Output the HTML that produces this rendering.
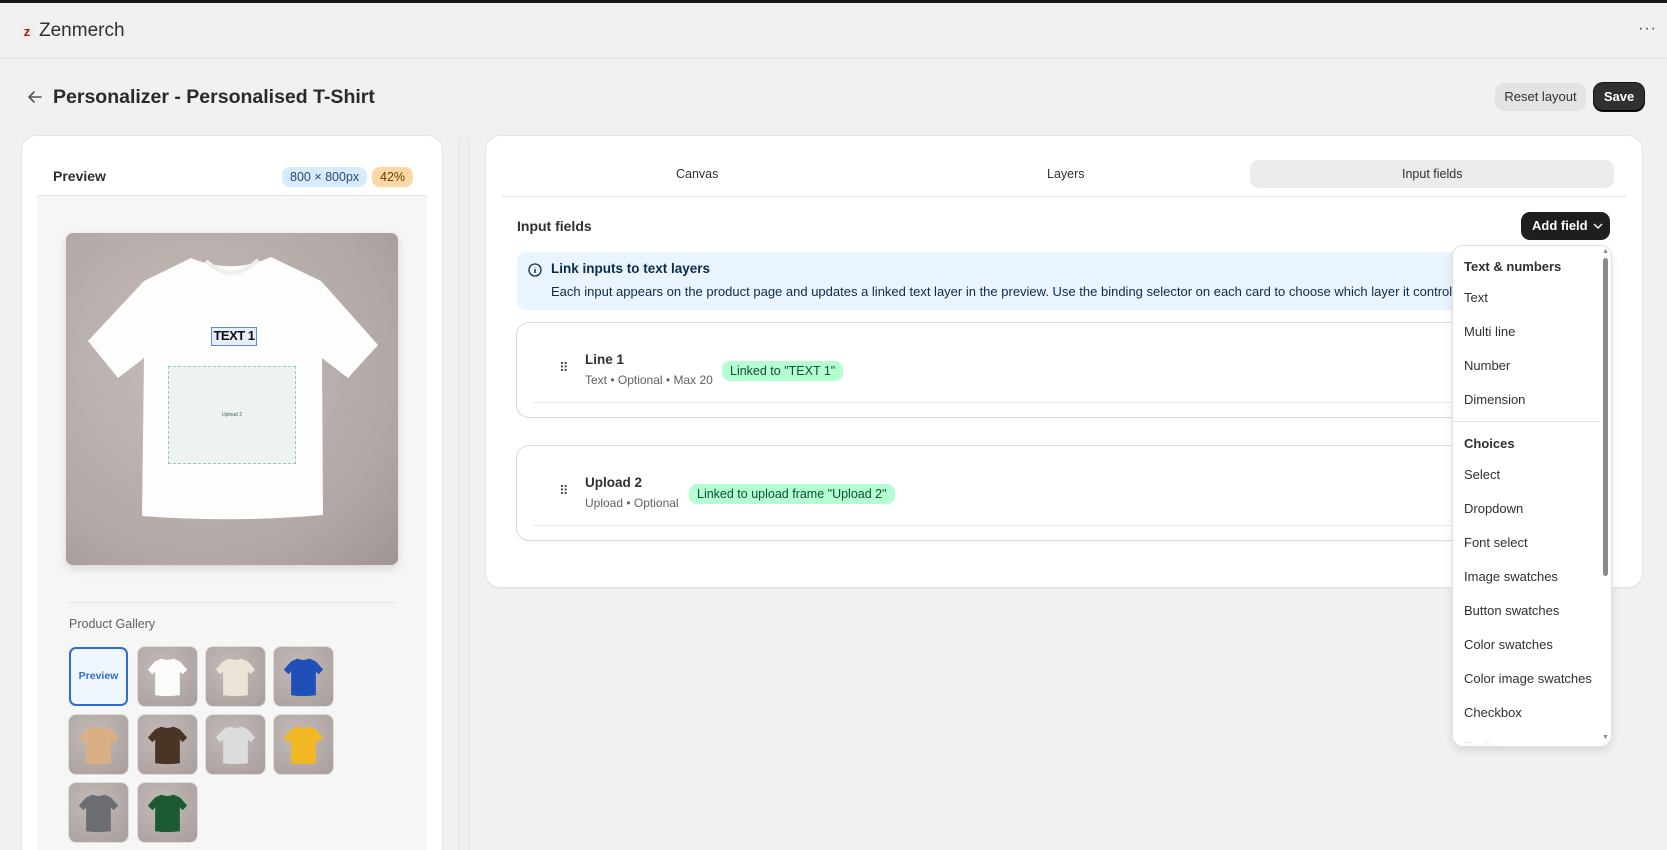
<!DOCTYPE html>
<html style="width:1667px;height:850px;overflow:hidden"><head><meta charset="utf-8"><style>
*{box-sizing:border-box;margin:0;padding:0}
body{width:1667px;height:850px;background:#f1f1f1;font-family:"Liberation Sans","DejaVu Sans",sans-serif;color:#303030;position:relative;overflow:hidden}
#w{position:absolute;left:0;top:0;width:1667px;height:850px;overflow:hidden}
.a{position:absolute}
.topbar{left:0;top:0;width:1667px;height:3px;background:#1a1a1a}
.hdr{left:0;top:3px;width:1667px;height:56px;border-bottom:1px solid #e3e3e3}
.card{background:#fff;border-radius:14px;box-shadow:0 0 0 1px #e4e4e4,0 1px 2px rgba(0,0,0,.08)}
.pill{border-radius:8px;font-size:12.5px;padding:0 8px;height:20px;line-height:20px}
.dd-item{position:absolute;left:11px;font-size:13px;color:#303030}
.dd-h{position:absolute;left:11px;font-size:13px;font-weight:bold;color:#303030}
.thumb{position:absolute;width:59px;height:59px;border-radius:7px;background:radial-gradient(circle at 40% 35%,#c4bbb8,#a79d9a);box-shadow:0 0 0 1px #ddd}
.thumb svg{position:absolute;left:8px;top:8px}
.sub{font-size:12.5px;color:#616161;white-space:nowrap}
</style></head><body><div id="w">
<div class="a topbar"></div>
<div class="a hdr">
 <div class="a" style="left:20px;top:22px;width:14px;height:14px;background:#f3ece6;color:#7a2a1c;font-weight:bold;font-size:13px;line-height:14px;text-align:center">z</div>
 <div class="a" style="left:39px;top:17px;font-size:19px;color:#303030">Zenmerch</div>
 <div class="a" style="left:1638px;top:17px;font-size:16px;letter-spacing:1px;color:#444">···</div>
</div>
<svg class="a" style="left:27px;top:90px" width="16" height="14" viewBox="0 0 16 14"><path d="M14 7H2M7 2L2 7l5 5" stroke="#555" stroke-width="1.6" fill="none" stroke-linecap="round"/></svg>
<div class="a" style="left:53px;top:86px;font-size:19.5px;font-weight:bold;color:#2a2a2a">Personalizer - Personalised T-Shirt</div>
<div class="a" style="left:1495px;top:83px;width:91px;height:28px;border-radius:9px;background:#e3e3e3;font-size:13px;line-height:28px;text-align:center;color:#303030">Reset layout</div>
<div class="a" style="left:1594px;top:83px;width:50px;height:28px;border-radius:9px;background:#303030;box-shadow:inset 0 -1px 0 #000,0 0 0 1px #111;font-size:13px;font-weight:bold;line-height:28px;text-align:center;color:#fff">Save</div>

<div class="a card" style="left:22px;top:136px;width:420px;height:714px;border-radius:14px 14px 0 0">
 <div class="a" style="left:31px;top:32px;font-size:14px;font-weight:bold">Preview</div>
 <div class="a pill" style="left:260px;top:31px;background:#d6ebfd;color:#2c4a6b">800 × 800px</div>
 <div class="a pill" style="left:350px;top:31px;background:#ffd6a4;color:#5e4200">42%</div>
 <div class="a" style="left:15px;top:59px;width:390px;height:655px;background:#f6f6f6;border-top:1px solid #e3e3e3"></div>
</div>
<div class="a" style="left:66px;top:233px;width:332px;height:332px;border-radius:7px;background:radial-gradient(circle at 40% 40%,#c7bebb,#b1a7a4 70%,#9f9592);box-shadow:0 4px 10px rgba(0,0,0,.12);overflow:hidden">
 <svg width="332" height="332" viewBox="0 0 332 332"><path d="M125 25 Q166 42 205 24 L255 48 L312 112 L282 145 L256 125 L257 282 Q166 290 76 283 L78 125 L52 145 L22 108 L78 48 Z" fill="#fdfdfd"/><path d="M140 28 Q166 52 192 27" stroke="#eee" stroke-width="4" fill="none"/></svg>
 <div class="a" style="left:145px;top:94px;width:46px;height:19px;border:1.5px solid #5b8bd6;background:#e7eefb;font-size:13px;font-weight:bold;line-height:16px;text-align:center;color:#111;white-space:nowrap;letter-spacing:-0.5px">TEXT 1</div>
 <div class="a" style="left:102px;top:133px;width:128px;height:98px;border:1px dashed #9cc8b8;background:#eef3f1;font-size:5px;color:#2f6a55;text-align:center;line-height:96px">Upload 2</div>
</div>
<div class="a" style="left:69px;top:602px;width:326px;height:1px;background:#e3e3e3"></div>
<div class="a" style="left:69px;top:617px;font-size:12.5px;color:#616161">Product Gallery</div>
<div class="a" style="left:69px;top:647px;width:59px;height:59px;border:2px solid #2c6ecb;border-radius:7px;background:#f0f6ff;color:#2c6ecb;font-size:10.5px;font-weight:bold;text-align:center;line-height:55px">Preview</div>
<div id="th"></div>

<div class="a" style="left:459px;top:136px;width:10px;height:714px;border-radius:5px 5px 0 0;background:#efefef;box-shadow:0 0 0 1px #e4e4e4"></div>

<div class="a card" style="left:486px;top:136px;width:1156px;height:451px">
 <div class="a" style="left:764px;top:24px;width:364px;height:28px;border-radius:9px;background:#ebebeb"></div>
 <div class="a" style="left:190px;top:31px;font-size:12.5px">Canvas</div>
 <div class="a" style="left:561px;top:31px;font-size:12.5px">Layers</div>
 <div class="a" style="left:916px;top:31px;font-size:12.5px">Input fields</div>
 <div class="a" style="left:16px;top:60px;width:1124px;height:1px;background:#e3e3e3"></div>
 <div class="a" style="left:31px;top:82px;font-size:14px;font-weight:bold">Input fields</div>
 <div class="a" style="left:1035px;top:76px;width:89px;height:28px;border-radius:9px;background:#1e1e1e;color:#fff;font-size:13px;font-weight:bold;line-height:28px;padding-left:11px;white-space:nowrap">Add field <svg width="10" height="8" viewBox="0 0 10 8" style="margin-left:2px"><path d="M1 2l4 4 4-4" stroke="#fff" stroke-width="1.4" fill="none"/></svg></div>
 <div class="a" style="left:31px;top:116px;width:1080px;height:58px;border-radius:9px;background:#eaf4ff;overflow:hidden">
  <svg class="a" style="left:11px;top:11px" width="14" height="14" viewBox="0 0 14 14"><circle cx="7" cy="7" r="6" stroke="#0b2c4a" stroke-width="1.3" fill="none"/><path d="M7 6v4M7 4v.5" stroke="#0b2c4a" stroke-width="1.4"/></svg>
  <div class="a" style="left:34px;top:9px;font-size:13.5px;font-weight:bold;color:#0b2c4a">Link inputs to text layers</div>
  <div class="a" style="left:34px;top:32px;font-size:13px;color:#0b2c4a;white-space:nowrap">Each input appears on the product page and updates a linked text layer in the preview. Use the binding selector on each card to choose which layer it controls.</div>
 </div>
 <div class="a" style="left:31px;top:187px;width:1080px;height:94px;border-radius:12px;box-shadow:0 0 0 1px #dcdcdc,0 1px 1px rgba(0,0,0,.12)">
  <div class="a" style="left:42px;top:42px;font-size:13px;line-height:5px;color:#333">⠿</div>
  <div class="a" style="left:68px;top:29px;font-size:13.5px;font-weight:bold">Line 1</div>
  <div class="a sub" style="left:68px;top:50px;font-size:12px">Text • Optional • Max 20</div>
  <div class="a" style="left:205px;top:38px;height:20px;line-height:20px;padding:0 8px;border-radius:8px;background:#b4fed2;color:#0c5132;font-size:12.5px;white-space:nowrap">Linked to "TEXT 1"</div>
  <div class="a" style="left:935px;top:38px;font-size:13px;color:#2c6ecb">F</div>
  <div class="a" style="left:15px;top:79px;width:1060px;height:1px;background:#ebebeb"></div>
 </div>
 <div class="a" style="left:31px;top:310px;width:1080px;height:94px;border-radius:12px;box-shadow:0 0 0 1px #dcdcdc,0 1px 1px rgba(0,0,0,.12)">
  <div class="a" style="left:42px;top:42px;font-size:13px;line-height:5px;color:#333">⠿</div>
  <div class="a" style="left:68px;top:29px;font-size:13.5px;font-weight:bold">Upload 2</div>
  <div class="a sub" style="left:68px;top:50px;font-size:12px">Upload • Optional</div>
  <div class="a" style="left:172px;top:38px;height:20px;line-height:20px;padding:0 8px;border-radius:8px;background:#b4fed2;color:#0c5132;font-size:12.5px;white-space:nowrap">Linked to upload frame "Upload 2"</div>
  <div class="a" style="left:15px;top:79px;width:1060px;height:1px;background:#ebebeb"></div>
 </div>
</div>

<div class="a" style="left:1453px;top:246px;width:158px;height:500px;background:#fff;border-radius:10px;box-shadow:0 0 0 1px #e0e0e0,0 4px 10px rgba(0,0,0,.12);overflow:hidden">
 <div class="dd-h" style="top:13px">Text &amp; numbers</div>
 <div class="dd-item" style="top:44px">Text</div>
 <div class="dd-item" style="top:78px">Multi line</div>
 <div class="dd-item" style="top:112px">Number</div>
 <div class="dd-item" style="top:146px">Dimension</div>
 <div class="a" style="left:0;top:175px;width:148px;height:1px;background:#e3e3e3"></div>
 <div class="dd-h" style="top:190px">Choices</div>
 <div class="dd-item" style="top:221px">Select</div>
 <div class="dd-item" style="top:255px">Dropdown</div>
 <div class="dd-item" style="top:289px">Font select</div>
 <div class="dd-item" style="top:323px">Image swatches</div>
 <div class="dd-item" style="top:357px">Button swatches</div>
 <div class="dd-item" style="top:391px">Color swatches</div>
 <div class="dd-item" style="top:425px">Color image swatches</div>
 <div class="dd-item" style="top:459px">Checkbox</div>
 <div class="dd-item" style="top:493px">Radio</div>
 <div class="a" style="left:0;top:470px;width:150px;height:30px;background:linear-gradient(rgba(255,255,255,0),#fff)"></div>
 <div class="a" style="left:150px;top:12px;width:5px;height:318px;border-radius:3px;background:#8a8a8a"></div>
 <div class="a" style="left:149px;top:2px;font-size:7px;color:#888">▲</div>
 <div class="a" style="left:149px;top:488px;font-size:7px;color:#888">▼</div>
</div>
</div>
<script>
var cols=["#fbfbfb","#ece4d6","#1f4fb8","#d9b084","#4a3425","#dcdcdc","#f2b824","#6c6d70","#1c5a33"];
var pos=[[138,647],[206,647],[274,647],[69,715],[138,715],[206,715],[274,715],[69,783],[138,783]];
var h="";
for(var i=0;i<9;i++){h+='<div class="thumb" style="left:'+pos[i][0]+'px;top:'+pos[i][1]+'px"><svg width="43" height="43" viewBox="0 0 47 47"><path d="M17 4 Q23 7 30 4 L37 7 L45 16 L40 21 L37 18 L37 44 Q23 46 10 44 L10 18 L7 21 L2 16 L10 7 Z" fill="'+cols[i]+'"/></svg></div>';}
document.getElementById("th").innerHTML=h;
</script>
</body></html>
